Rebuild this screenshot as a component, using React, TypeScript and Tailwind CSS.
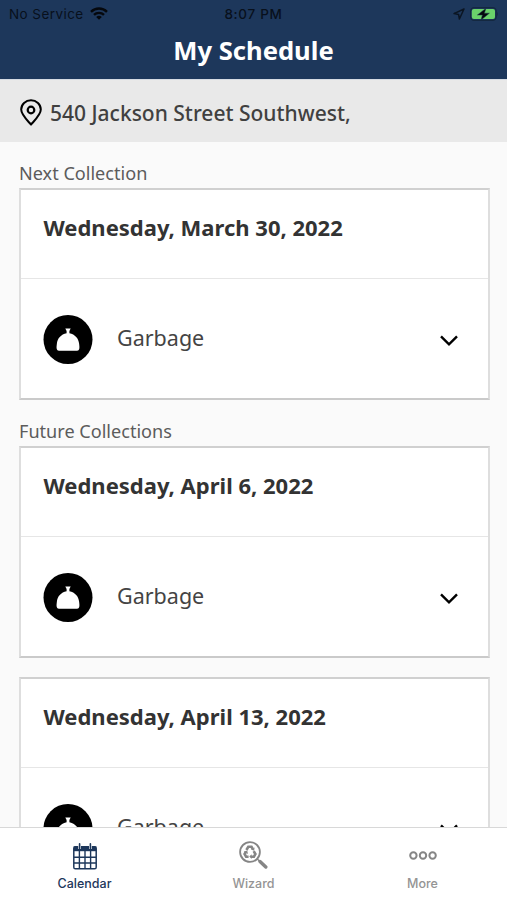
import React from "react";

type Collection = {
  date: string;
  type: string;
};

const nextCollection: Collection = {
  date: "Wednesday, March 30, 2022",
  type: "Garbage",
};

const futureCollections: Collection[] = [
  { date: "Wednesday, April 6, 2022", type: "Garbage" },
  { date: "Wednesday, April 13, 2022", type: "Garbage" },
];

const WifiIcon = () => (
  <svg width="18" height="13" viewBox="0 0 18 13" fill="none" stroke="#05080d" strokeWidth="2.4">
    <path d="M1 4.8a11.4 11.4 0 0 1 16 0" />
    <path d="M4 7.9a7.1 7.1 0 0 1 10 0" />
    <path d="M6.2 10.1a4 4 0 0 1 5.6 0L9 12.8z" fill="#05080d" stroke="none" />
  </svg>
);

const LocationIcon = () => (
  <svg width="12" height="12" viewBox="0 0 12 12" fill="none" stroke="#0b1522" strokeWidth="1.5" strokeLinejoin="round">
    <path d="M11 1 1 5.6l4.6.8L6.4 11z" />
  </svg>
);

const BatteryIcon = () => (
  <svg width="28" height="14" viewBox="0 0 28 14">
    <rect x="0.6" y="0.6" width="25.6" height="12.8" rx="3.6" fill="none" stroke="#142840" strokeWidth="1.2" />
    <rect x="1.8" y="2" width="23.2" height="10" rx="2" fill="#6bd26b" />
    <path d="M27 5v4c1-.4 1-3.6 0-4z" fill="#142840" />
    <path d="m16 1.2-8.6 6.8h5L11 13l8.4-6.8h-5z" fill="#05080d" stroke="#1f3b52" strokeWidth=".5" />
  </svg>
);

const PinIcon = () => (
  <svg width="22" height="27" viewBox="0 0 22 27" fill="none" stroke="#000" strokeWidth="2">
    <path d="M11 25.6C6.6 20.6 1.2 15.6 1.2 10.6a9.8 9.4 0 0 1 19.6 0c0 5-5.4 10-9.8 15z" strokeLinejoin="round" />
    <circle cx="11" cy="11" r="3.3" strokeWidth="2.2" />
  </svg>
);

const GarbageIcon = () => (
  <svg width="50" height="49" viewBox="0 0 50 49">
    <circle cx="25" cy="24.5" r="24.5" fill="#000" />
    <path
      d="M22.3 13.6h5.4l-1.3 2.4v2.2c5.6 1.1 9.2 5.2 9.7 10.4.3 2.5.5 4 .2 5.2-.3 1.3-1 1.9-2.2 1.9H15.9c-1.2 0-1.9-.6-2.2-1.9-.3-1.2-.1-2.7.2-5.2.5-5.2 4.1-9.3 9.7-10.4V16z"
      fill="#fff"
    />
  </svg>
);

const ChevronIcon = () => (
  <svg width="18" height="12" viewBox="0 0 18 12" fill="none" stroke="#000" strokeWidth="2.4">
    <path d="m1 1.4 8 8 8-8" />
  </svg>
);

const CalendarIcon = () => (
  <svg width="24" height="27" viewBox="0 0 24 27" fill="none" stroke="#1d375b">
    <path d="M.7 3.4h22.6v4.8H.7z" fill="#1d375b" stroke="none" />
    <rect x="0.8" y="3.8" width="22.4" height="22" rx="1.6" strokeWidth="1.5" />
    <path d="M1 14.2h22M1 20h22M6.4 8v17.5M12 8v17.5M17.6 8v17.5" strokeWidth="1.4" />
    <path d="M6.6 2v4M17.4 2v4" stroke="#fff" strokeWidth="2.8" />
    <path d="M6.6.8v5M17.4.8v5" strokeWidth="1.6" strokeLinecap="round" />
  </svg>
);

const WizardIcon = () => (
  <svg width="29" height="28" viewBox="0 0 29 28" fill="none" stroke="#858585">
    <circle cx="11" cy="11" r="9.9" strokeWidth="1.8" />
    <path d="m21 20.5 5.8 5.5" strokeWidth="3.4" strokeLinecap="round" />
    <path d="m18 17.7 2.5 2.3" strokeWidth="1.4" />
    <g strokeWidth="2.6">
      <path d="m7.4 9 1.9-3.2h3.2l1.3 2.2" />
      <path d="m14.7 10.2 1.7 2.9-1.5 2.6h-2.9" />
      <path d="M9.6 15.7H7.1l-1.5-2.6 1.2-2.1" />
    </g>
    <path d="m15.6 6.5-.5 3.3-3.1-1.3zM12.6 13.3v4.6l-2.3-2.3zM4.8 10.6l3.4-1 .8 3.3z" fill="#858585" stroke="none" />
  </svg>
);

const MoreIcon = () => (
  <svg width="28" height="9" viewBox="0 0 28 9" fill="none" stroke="#858585" strokeWidth="2">
    <circle cx="4.4" cy="4.5" r="3.2" />
    <circle cx="14" cy="4.5" r="3.2" />
    <circle cx="23.6" cy="4.5" r="3.2" />
  </svg>
);

const CollectionCard: React.FC<Collection> = ({ date, type }) => (
  <article className="h-[212px] shrink-0 border-2 border-t-[#d0d0d0] border-x-[#dedede] border-b-[#cacaca] bg-white">
    <h2 className="flex h-[89px] items-center border-b border-[#e6e6e6] px-[22.5px] pb-[14px] text-[22px] font-bold text-[#333]">
      {date}
    </h2>
    <div className="flex h-[119px] items-center pt-[2px] pr-[30px] pl-[22px]">
      <GarbageIcon />
      <span className="ml-6 flex-1 pb-[2px] text-[21.5px] text-[#444]">{type}</span>
      <span className="pt-[3px]">
        <ChevronIcon />
      </span>
    </div>
  </article>
);

const App: React.FC = () => {
  return (
    <div className="flex h-[900px] w-[507px] flex-col overflow-hidden bg-[#fafafa] font-['Noto_Sans',sans-serif]">
      <header className="h-[79px] shrink-0 bg-[#1d375b]">
        <div className="grid h-[27px] grid-cols-3 items-center px-[9px] font-['Inter',sans-serif] text-[13.5px] text-[#08101c]">
          <div className="flex items-center gap-1.5">
            <span className="pt-px tracking-[0.43px]">No Service</span>
            <WifiIcon />
          </div>
          <span className="pt-px text-center font-medium tracking-[0.7px]">8:07 PM</span>
          <div className="flex items-center justify-end gap-[5px]">
            <LocationIcon />
            <BatteryIcon />
          </div>
        </div>
        <h1 className="text-center text-[25.6px] leading-[48px] font-bold text-white">My Schedule</h1>
      </header>

      <div className="flex h-[63px] shrink-0 items-center gap-2 border-t border-[#d5dbe3] bg-[#e9e9e9] pt-[2px] pl-5">
        <PinIcon />
        <span className="pt-[3px] text-[21px] font-medium text-[#404040]">540 Jackson Street Southwest,</span>
      </div>

      <main className="flex min-h-0 flex-1 flex-col overflow-hidden pr-[17px] pl-[19px]">
        <h3 className="h-[46px] shrink-0 pt-[17px] text-[18.1px] leading-[28px] text-[#5c5c5c]">Next Collection</h3>
        <CollectionCard {...nextCollection} />
        <h3 className="h-[46px] shrink-0 pt-[17px] text-[18.1px] leading-[28px] text-[#5c5c5c]">Future Collections</h3>
        <div className="flex flex-col gap-[19px]">
          {futureCollections.map((collection) => (
            <CollectionCard key={collection.date} {...collection} />
          ))}
        </div>
      </main>

      <nav className="grid h-[73px] shrink-0 grid-cols-3 border-t border-[#d8d8d8] bg-white font-['Inter',sans-serif] text-[12.5px] font-medium text-[#949494]">
        <div className="flex flex-col items-center text-[#1d375b]">
          <div className="flex h-[56px] items-center">
            <CalendarIcon />
          </div>
          <span className="-mt-[8px] leading-[16px]">Calendar</span>
        </div>
        <div className="flex flex-col items-center">
          <div className="flex h-[54px] items-center">
            <WizardIcon />
          </div>
          <span className="-mt-[6px] leading-[16px]">Wizard</span>
        </div>
        <div className="flex flex-col items-center">
          <div className="flex h-[54px] items-center">
            <MoreIcon />
          </div>
          <span className="-mt-[6px] leading-[16px]">More</span>
        </div>
      </nav>
    </div>
  );
};

export default App;
